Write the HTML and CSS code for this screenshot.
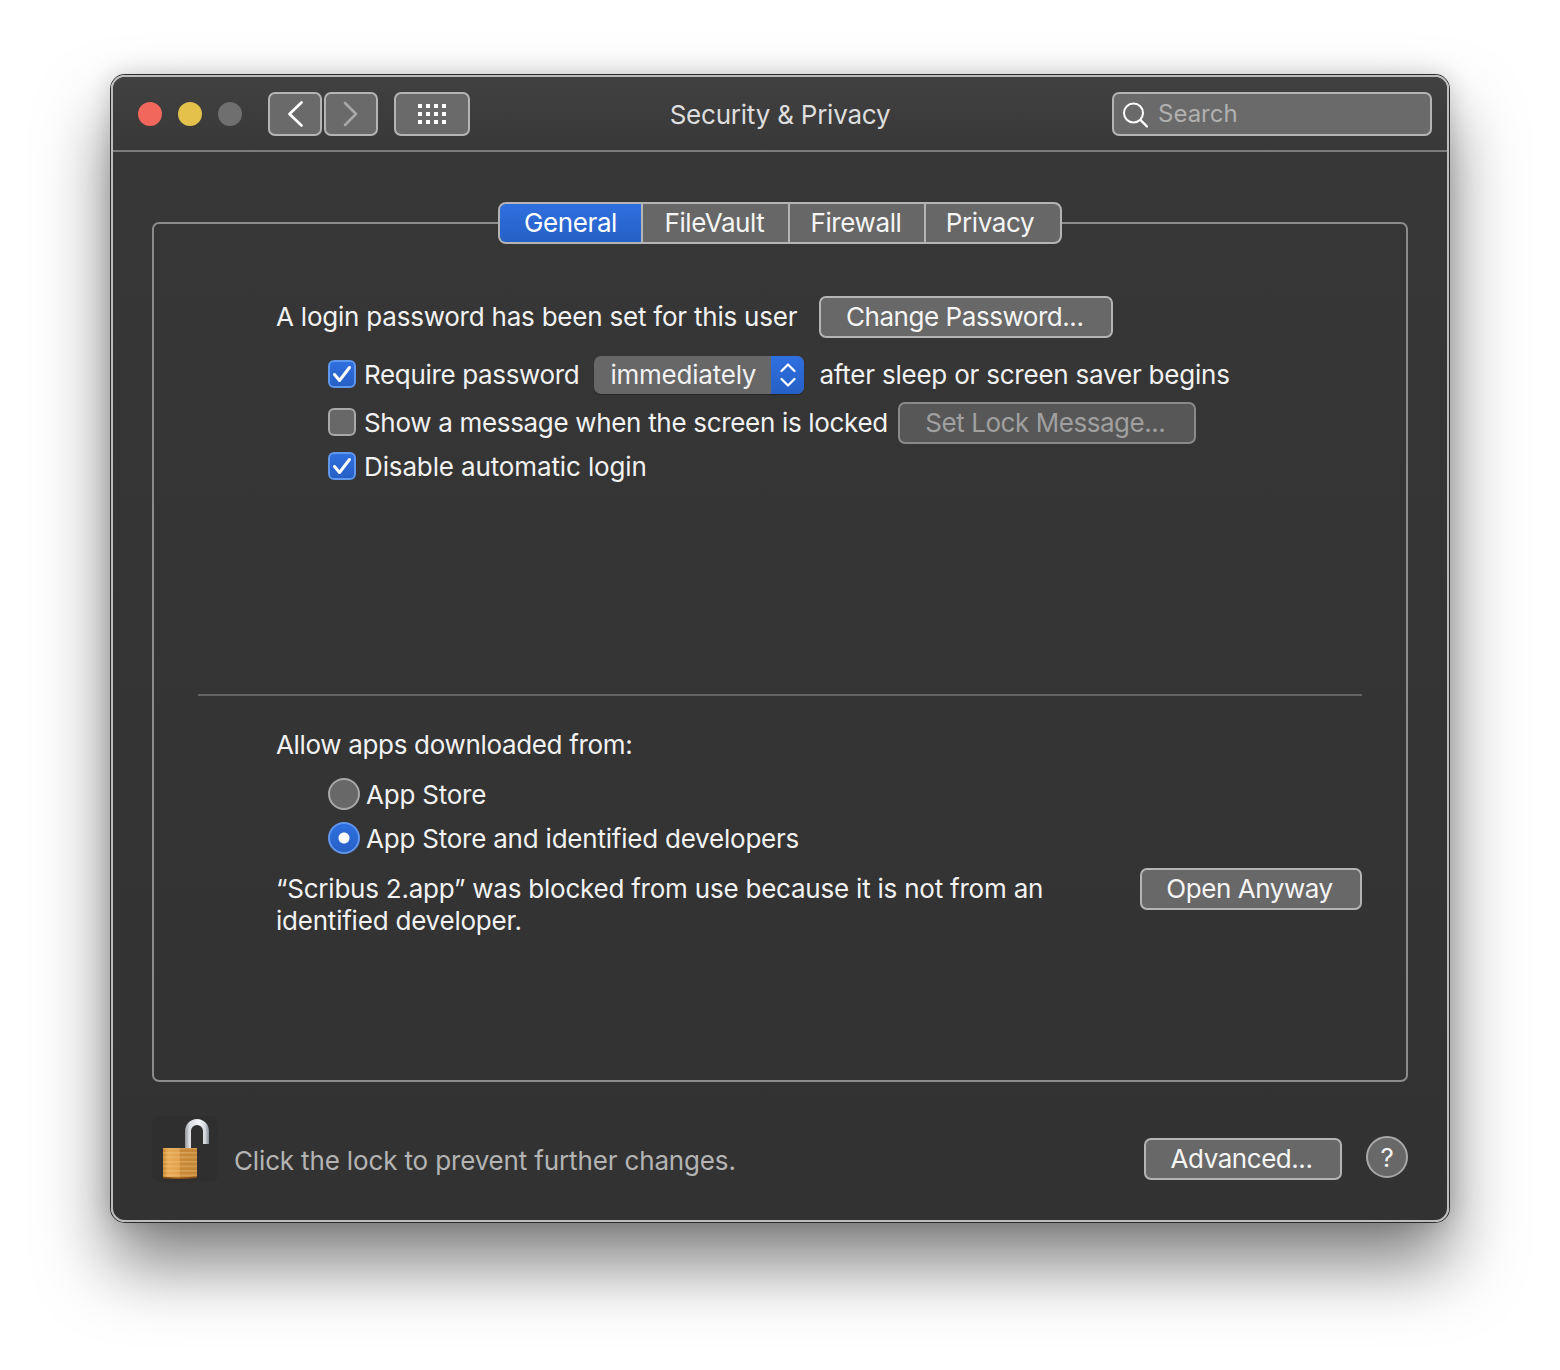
FILE: index.html
```html
<!DOCTYPE html>
<html lang="en">
<head>
<meta charset="utf-8">
<title>Security &amp; Privacy</title>
<link rel="stylesheet" href="styles.css">
</head>
<body>
<div class="window">
  <header class="titlebar">
    <div class="lights">
      <span class="light red"></span>
      <span class="light yellow"></span>
      <span class="light gray"></span>
    </div>
    <div class="nav">
      <div class="tbtn nav-btn"><svg width="16" height="26" viewBox="0 0 16 26"><path d="M14.500 1.500 2.500 13l12 11.500" fill="none" stroke="#fff" stroke-width="2.600" stroke-linecap="round" stroke-linejoin="round"/></svg></div>
      <div class="tbtn nav-btn"><svg width="16" height="26" viewBox="0 0 16 26"><path d="M2 2l11 11L2 24" fill="none" stroke="#a8a8a8" stroke-width="2.600" stroke-linecap="round" stroke-linejoin="round"/></svg></div>
    </div>
    <div class="tbtn grid-btn">
      <svg width="28" height="20" viewBox="0 0 28 20" fill="#fff"><path d="M0 0h4v4H0zM8 0h4v4H8zM16 0h4v4h-4zM24 0h4v4h-4zM0 8h4v4H0zM8 8h4v4H8zM16 8h4v4h-4zM24 8h4v4h-4zM0 16h4v4H0zM8 16h4v4H8zM16 16h4v4h-4zM24 16h4v4h-4z"/></svg>
    </div>
    <h1 class="title">Security &amp; Privacy</h1>
    <div class="search">
      <svg width="26" height="28" viewBox="0 0 26 28"><circle cx="11.500" cy="13" r="9.500" fill="none" stroke="#fff" stroke-width="2"/><path d="M18.500 20 25 26.500" stroke="#fff" stroke-width="2.400" stroke-linecap="round"/></svg>
      <span class="search-text">Search</span>
    </div>
  </header>

  <main class="content">
    <section class="panel">
      <div class="tabs">
        <span class="tab active tab-general">General</span>
        <span class="tab tab-filevault">FileVault</span>
        <span class="tab tab-firewall">Firewall</span>
        <span class="tab tab-privacy">Privacy</span>
      </div>

      <div class="upper">
        <div class="row login-row">
          <span class="login-text">A login password has been set for this user</span>
          <span class="btn change-btn">Change Password...</span>
        </div>
        <div class="row option require-row">
          <span class="check on"><svg width="20" height="18" viewBox="0 0 20 18"><path d="M2.500 9.500 7.500 15.500 17.500 2.500" fill="none" stroke="#fff" stroke-width="3" stroke-linecap="round" stroke-linejoin="round"/></svg></span>
          <span class="label">Require password</span>
          <span class="select">
            <span class="select-value">immediately</span>
            <span class="select-arrows"><svg width="16" height="28" viewBox="0 0 16 28"><path d="M1.500 10l6.500-6.500 6.500 6.500M1.500 18l6.500 6.500 6.500-6.500" fill="none" stroke="#fff" stroke-width="2.200" stroke-linecap="round" stroke-linejoin="round"/></svg></span>
          </span>
          <span class="after">after sleep or screen saver begins</span>
        </div>
        <div class="row option message-row">
          <span class="check"></span>
          <span class="label">Show a message when the screen is locked</span>
          <span class="btn disabled lock-msg-btn">Set Lock Message...</span>
        </div>
        <div class="row option disable-row">
          <span class="check on"><svg width="20" height="18" viewBox="0 0 20 18"><path d="M2.500 9.500 7.500 15.500 17.500 2.500" fill="none" stroke="#fff" stroke-width="3" stroke-linecap="round" stroke-linejoin="round"/></svg></span>
          <span class="label">Disable automatic login</span>
        </div>
      </div>

      <hr class="divider">

      <div class="lower">
        <p class="allow">Allow apps downloaded from:</p>
        <div class="row radio-row first-radio"><span class="radio"></span><span class="radio-label">App Store</span></div>
        <div class="row radio-row"><span class="radio on"></span><span class="radio-label">App Store and identified developers</span></div>
        <div class="blocked">
          <p class="blocked-text">“Scribus 2.app” was blocked from use because it is not from an identified developer.</p>
          <span class="btn open-btn">Open Anyway</span>
        </div>
      </div>
    </section>

    <footer class="footer">
      <svg class="lock" width="66" height="66" viewBox="0 0 66 66">
        <defs>
          <linearGradient id="shackle" gradientUnits="userSpaceOnUse" x1="33" x2="57" y1="0" y2="0">
            <stop offset="0" stop-color="#8f959b"/><stop offset=".18" stop-color="#d8dce0"/><stop offset=".6" stop-color="#f4f6f8"/><stop offset=".85" stop-color="#cfd3d8"/><stop offset="1" stop-color="#7f868e"/>
          </linearGradient>
          <linearGradient id="body" x1="0" x2="1" y1="0" y2="0">
            <stop offset="0" stop-color="#c8852f"/><stop offset=".15" stop-color="#e9aa55"/><stop offset=".48" stop-color="#e2a04c"/><stop offset=".5" stop-color="#c98a38"/><stop offset="1" stop-color="#c58635"/>
          </linearGradient>
          <pattern id="ribs" width="4" height="4.500" patternUnits="userSpaceOnUse"><rect width="4" height="1.500" fill="#f6cf92" opacity=".35"/></pattern>
        </defs>
        <rect x="0" y="0" width="66" height="66" rx="8" fill="#2f2f2f"/>
        <path d="M36 32V15a9 9 0 0 1 18 0V28" fill="none" stroke="url(#shackle)" stroke-width="6"/>
        <path d="M11 32h34v29c-11 1.500-23 1.500-34 .5z" fill="url(#body)"/>
        <path d="M11 32h34v29c-11 1.500-23 1.500-34 .5z" fill="url(#ribs)"/>
        <path d="M11 61.500c11 1 23 1 34-.5" fill="none" stroke="#8b4f16" stroke-width="1.500"/>
      </svg>
      <span class="lock-text">Click the lock to prevent further changes.</span>
      <span class="btn advanced-btn">Advanced...</span>
      <span class="help">?</span>
    </footer>
  </main>
</div>
</body>
</html>
```

FILE: styles.css
```css
* { box-sizing: border-box; }
html, body { margin: 0; padding: 0; }
body {
  width: 1560px;
  height: 1370px;
  background: #fff;
  font-family: Inter, "Liberation Sans", sans-serif;
  font-size: 26px;
  letter-spacing: -0.22px;
  color: #f2f2f2;
  overflow: hidden;
  padding: 75px 111px 0;
}
p, h1 { margin: 0; font: inherit; }

.window {
  width: 1338px;
  height: 1147px;
  border: 2px solid #bdbdbd;
  border-radius: 14px;
  background: linear-gradient(#373737, #323232);
  box-shadow: 0 0 0 1px #2c2c2c, 0 0 24px rgba(0,0,0,.18), 0 42px 70px rgba(0,0,0,.5);
  display: flex;
  flex-direction: column;
}

.titlebar {
  height: 75px;
  flex: none;
  border-bottom: 2px solid #7c7c7c;
  border-radius: 12px 12px 0 0;
  background: linear-gradient(#414141, #383838);
  display: flex;
  align-items: center;
  padding: 0 15px 0 25px;
  position: relative;
}
.lights { display: flex; gap: 16px; }
.light { width: 24px; height: 24px; border-radius: 50%; }
.red { background: #f2675c; }
.yellow { background: #e3c14b; }
.gray { background: #6f6f6f; }

.tbtn {
  height: 44px;
  border: 2px solid #b4b4b4;
  border-radius: 7px;
  background: #6a6a6a;
  display: flex;
  align-items: center;
  justify-content: center;
}
.nav { display: flex; gap: 2px; margin-left: 26px; }
.nav-btn { width: 54px; }
.grid-btn { width: 76px; margin-left: 16px; }

.title {
  position: absolute;
  left: 0;
  right: 0;
  top: 22px;
  text-align: center;
  line-height: 32px;
  color: #dedede;
}

.search {
  margin-left: auto;
  width: 320px;
  height: 44px;
  border: 2px solid #b4b4b4;
  border-radius: 7px;
  background: #6a6a6a;
  display: flex;
  align-items: center;
  padding-left: 8px;
  gap: 10px;
}
.search-text { color: #b0b0b0; font-size: 24px; letter-spacing: 0; }

.content {
  flex: 1;
  padding: 70px 39px 0;
  display: flex;
  flex-direction: column;
}

.panel {
  height: 860px;
  flex: none;
  border: 2px solid #8c8c8c;
  border-radius: 7px;
  display: flex;
  flex-direction: column;
}

.tabs {
  align-self: center;
  margin-top: -22px;
  height: 42px;
  border: 2px solid #b4b4b4;
  border-radius: 8px;
  background: #676767;
  display: flex;
  overflow: hidden;
  flex: none;
}
.tab {
  display: flex;
  align-items: center;
  justify-content: center;
  border-left: 2px solid #b4b4b4;
  color: #f5f5f5;
  letter-spacing: -0.4px;
  padding-bottom: 2px;
}
.tab.active {
  margin: -2px 0 -2px -2px;
  border: 2px solid #5f97ec;
  border-right: 0;
  border-radius: 8px 0 0 8px;
  background: linear-gradient(#2f6fdf, #2660c6);
  color: #fff;
}
.tab-general { width: 143px; }
.tab-filevault { width: 147px; padding-right: 2px; }
.tab-firewall { width: 136px; padding-right: 2px; }
.tab-privacy { width: 136px; padding-right: 6px; }

.upper { padding-left: 122px; height: 450px; flex: none; padding-top: 52px; }
.row { display: flex; align-items: center; }
.btn {
  height: 42px;
  border: 2px solid #b4b4b4;
  border-radius: 7px;
  background: #686868;
  color: #f5f5f5;
  letter-spacing: -0.45px;
  padding-bottom: 2px;
  display: flex;
  align-items: center;
  justify-content: center;
  flex: none;
}
.login-row { height: 42px; gap: 22px; }
.login-text { padding-bottom: 2px; }
.change-btn { width: 294px; padding-right: 3px; }

.option { margin-left: 52px; }
.require-row { height: 38px; margin-top: 17px; }
.require-row .label { letter-spacing: -0.34px; }
.message-row { height: 42px; margin-top: 8px; }
.message-row .label { letter-spacing: -0.32px; }
.disable-row { height: 28px; margin-top: 9px; }
.disable-row .label { letter-spacing: -0.13px; }

.check {
  width: 28px;
  height: 28px;
  border-radius: 6px;
  border: 2px solid #a8a8a8;
  background: #686868;
  flex: none;
  display: flex;
  align-items: center;
  justify-content: center;
  margin-right: 8px;
}
.check.on {
  border-color: #5f97ec;
  background: linear-gradient(#2f6fdf, #2660c6);
}

.select {
  margin: 1px 0 -1px 15px;
  width: 210px;
  height: 38px;
  border-radius: 7px;
  background: #676767;
  display: flex;
  overflow: hidden;
  box-shadow: 0 1px 1px rgba(0,0,0,.3);
}
.select-value { flex: 1; padding-left: 16px; line-height: 38px; }
.select-arrows {
  width: 33px;
  background: linear-gradient(#2f6fdf, #2660c6);
  display: flex;
  align-items: center;
  justify-content: center;
}
.after { margin-left: 15px; }

.lock-msg-btn { width: 298px; margin: 1px 0 -1px 10px; padding-right: 3px; }
.btn.disabled { background: #575757; border-color: #8a8a8a; color: #a0a0a0; }

.divider {
  margin: 0 44px;
  height: 2px;
  border: 0;
  background: #636363;
  flex: none;
}

.lower { padding-left: 122px; padding-top: 32px; }
.allow { line-height: 34px; letter-spacing: -0.33px; }
.radio-row { margin-left: 52px; height: 32px; }
.first-radio { margin-top: 16px; }
.first-radio + .radio-row { margin-top: 12px; }
.radio {
  width: 32px;
  height: 32px;
  border-radius: 50%;
  border: 2px solid #a8a8a8;
  background: #686868;
  flex: none;
  margin-right: 6px;
}
.radio.on {
  border: 2px solid #5f97ec;
  background: radial-gradient(circle, #fff 0 5px, transparent 6px), linear-gradient(#2f6fdf, #2660c6);
}

.blocked {
  display: flex;
  justify-content: space-between;
  align-items: flex-start;
  margin-top: 14px;
  padding-right: 44px;
}
.blocked-text { width: 790px; line-height: 32px; margin-top: 5px; }
.open-btn { width: 222px; padding-right: 3px; }

.footer {
  margin-top: 34px;
  display: flex;
  align-items: flex-start;
}
.lock { flex: none; }
.lock-text { margin: 28px 0 0 16px; line-height: 34px; color: #b4b4b4; letter-spacing: -0.15px; }
.advanced-btn { width: 198px; margin: 22px 0 0 auto; padding-right: 3px; }
.help {
  width: 42px;
  height: 42px;
  margin: 20px 0 0 24px;
  border-radius: 50%;
  border: 2px solid #a8a8a8;
  background: #686868;
  display: flex;
  align-items: center;
  justify-content: center;
}
```
